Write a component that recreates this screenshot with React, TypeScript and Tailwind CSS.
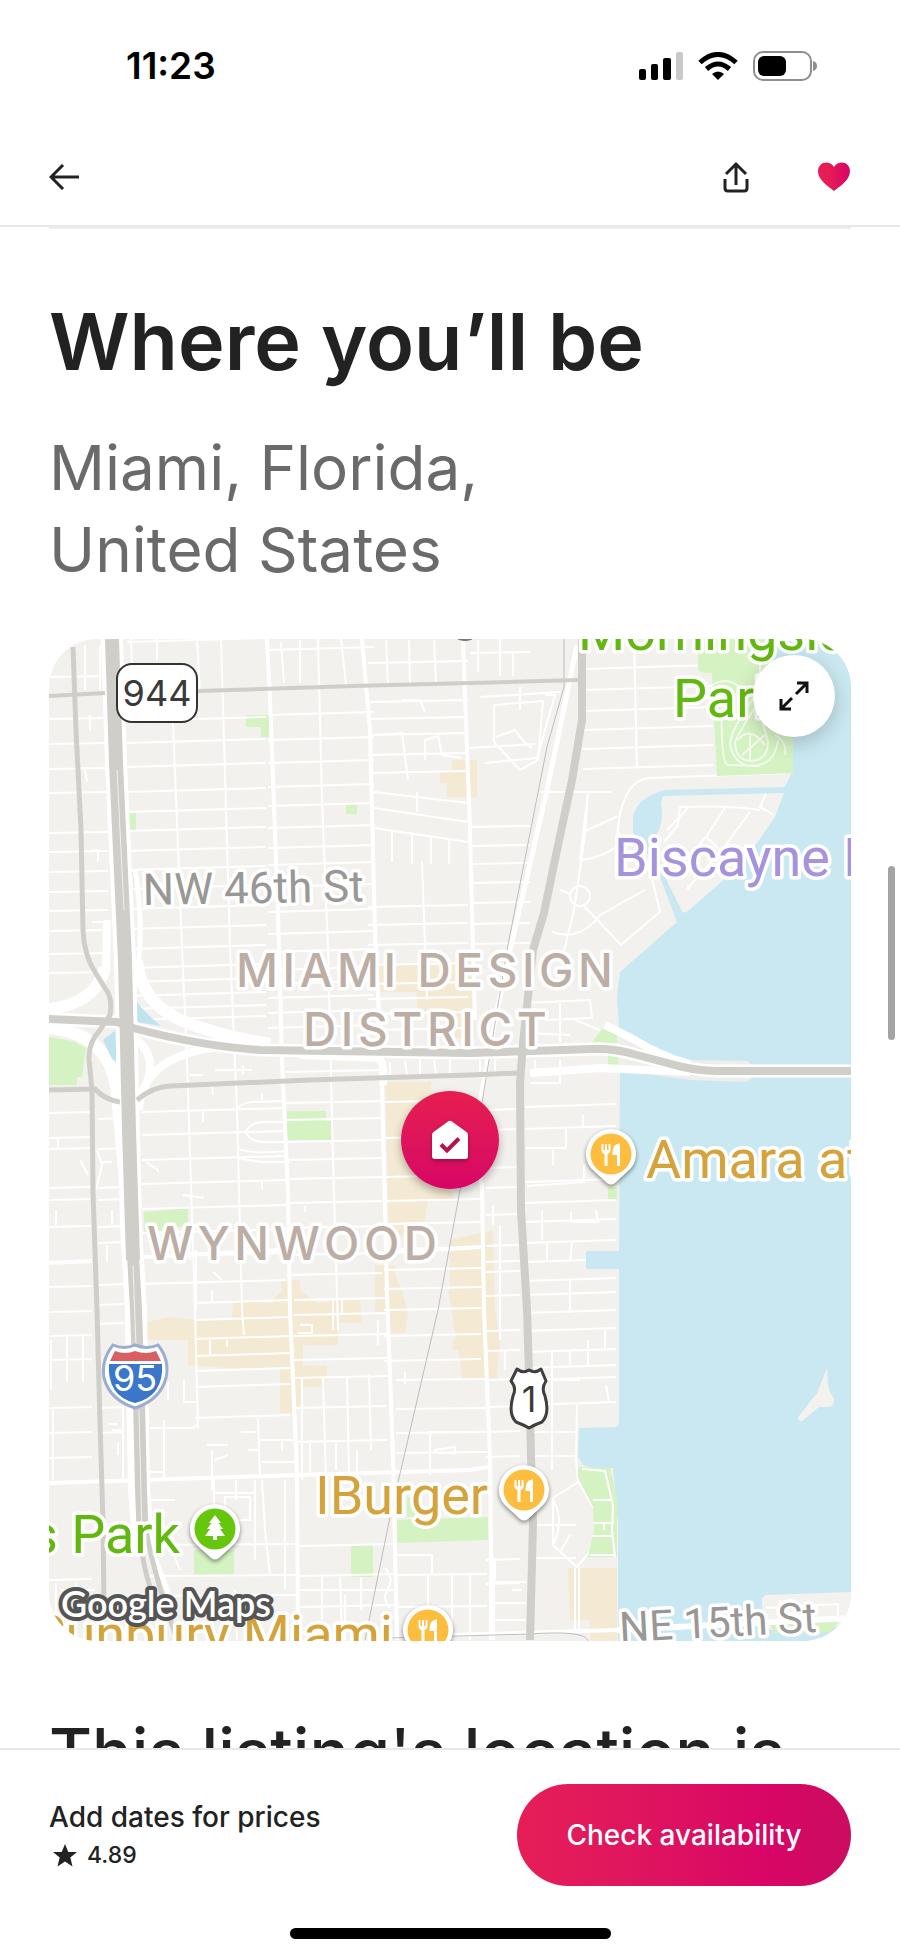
import { Fragment } from "react";

type Block = { x1: number; x2: number; slope: number; ys: number[] };

// East-west streets, grouped by the blocks they run through
const streetBlocks: Block[] = [
  { x1: 49, x2: 108, slope: -0.02, ys: [677, 719, 744, 769, 793, 833, 852, 872, 892, 911, 931, 954, 973] },
  { x1: 127, x2: 266, slope: -0.03, ys: [642, 721, 743, 767, 792, 812, 831, 851, 870, 889, 909, 929, 949, 968, 982, 996, 1009, 1020] },
  { x1: 268, x2: 374, slope: -0.03, ys: [650, 715, 740, 763, 787, 806, 828, 848, 865, 887, 912, 934, 952, 970, 984, 998, 1013, 1028] },
  { x1: 368, x2: 468, slope: -0.02, ys: [663, 702, 719, 735, 755, 773, 907, 925, 945, 965, 984, 999, 1014, 1030] },
  { x1: 470, x2: 530, slope: -0.02, ys: [653, 827, 846, 864, 883, 903, 924, 944] },
  { x1: 583, x2: 713, slope: -0.03, ys: [669, 690, 711, 730, 749, 769] },
  { x1: 49, x2: 92, slope: -0.02, ys: [1113, 1138, 1149, 1188, 1200, 1227, 1287, 1312, 1336, 1360, 1408, 1433, 1458, 1580] },
  { x1: 98, x2: 124, slope: -0.02, ys: [1119, 1149, 1188, 1200, 1227, 1243, 1285, 1305, 1324, 1408, 1433] },
  { x1: 142, x2: 286, slope: -0.03, ys: [1112, 1135, 1160, 1184, 1209, 1233, 1257, 1284] },
  { x1: 286, x2: 382, slope: -0.02, ys: [1072, 1103, 1120, 1142, 1160, 1179, 1203, 1228, 1255, 1275] },
  { x1: 384, x2: 481, slope: -0.02, ys: [1102, 1138, 1177, 1201, 1224, 1249, 1270, 1289, 1310, 1336, 1361] },
  { x1: 525, x2: 616, slope: -0.03, ys: [1107, 1129, 1182, 1203, 1222, 1243, 1262, 1281, 1295, 1313, 1331, 1352, 1368, 1380, 1405] },
  { x1: 486, x2: 520, slope: -0.02, ys: [1110, 1130, 1168, 1188, 1215, 1246, 1262, 1272, 1296, 1331, 1351, 1380, 1407, 1432, 1457, 1560, 1584] },
  { x1: 195, x2: 290, slope: -0.03, ys: [1303, 1320, 1339, 1356, 1371, 1387, 1418] },
  { x1: 294, x2: 387, slope: -0.02, ys: [1300, 1315, 1336, 1360, 1378, 1408, 1442] },
  { x1: 396, x2: 487, slope: -0.01, ys: [1380, 1409, 1433, 1453, 1575, 1607] },
  { x1: 531, x2: 576, slope: -0.01, ys: [1432, 1456, 1525, 1558] },
  { x1: 150, x2: 300, slope: -0.01, ys: [1545, 1576, 1596] },
  { x1: 300, x2: 395, slope: -0.02, ys: [1546, 1576, 1607] },
];

const rows = (b: Block) =>
  b.ys.map((y) => `M${b.x1} ${y}L${b.x2} ${Math.round(y + (b.x2 - b.x1) * b.slope)}`).join("");

const minorStreets = [
  "M197 639L200 693M157 639V660M131 639L134 720M173 723L182 947L187 1060L195 1310L198 1428",
  "M221 639L224 740L230 947L237 1110L242 1310L244 1335M318 639L322 800L328 947L333 1160L338 1330",
  "M281 642L284 683M300 640V683M386 640L388 685M409 640L410 685M434 640L436 684M341 639L346 685",
  "M392 830V862M412 832V864M431 836V864M449 838V864M417 792V812M374 792L468 803M374 808L468 822M374 828L468 842",
  "M422 862L427 1000M634 639L637 767M500 639V676M513 652V676M478 640V672",
  "M494 705L543 701L538 760L520 770L494 742ZM496 737L515 730L524 742L532 748M470 748L535 744",
  "M545 695L555 695L537 758L485 763M520 687V710M480 697L560 692",
  "M425 760V740L438 736L442 755L462 758M402 700H420L425 712M374 735L402 733L408 780",
  "M85 645V690M100 645V690M90 715V730M85 770L87 782M92 850H98V862M92 922H107",
  "M541 792H612M588 793L585 835L574 910L563 955M588 793L580 860M583 832L618 816M580 860Q605 858 625 840",
  "M617 840Q620 780 650 778L785 773M618 830Q622 860 650 870L660 912L621 945L583 905M552 932Q580 942 600 915L645 890",
  "M570 896a10 10 0 1 0 20 0a10 10 0 1 0 -20 0M560 890L570 894",
  "M237 1110Q240 1103 252 1102L284 1101M245 1132Q252 1122 262 1122H285M245 1132Q252 1142 262 1142H285M238 1148Q250 1155 285 1151M238 1158L260 1162H290",
  "M188 1225L190 1260M196 1250V1310M213 1272L222 1280M183 1195L204 1198M146 1162L158 1170V1172M262 1182V1190M305 1206V1212",
  "M97 1150L102 1165L96 1190M80 1160L88 1175M101 1162H112M56 1210V1225M107 1245V1262",
  "M566 1129V1148H526M583 1115V1127M553 1148V1165M584 1165V1182L527 1186M542 1210V1240M571 1212V1222L598 1222L596 1210",
  "M547 1243V1262M572 1243L570 1262M570 1278V1313M605 1330V1350M588 1340V1365M570 1350V1365M606 1385L609 1402",
  "M577 1405L576 1460L578 1482L595 1510V1545L577 1567L553 1545V1498L578 1482M553 1500Q565 1520 553 1545M570 1535L560 1552",
  "M552 1350V1470M552 1380H580M493 1205V1225M500 1225V1340M505 1350V1370M575 1568V1630M579 1568V1630",
  "M67 1336V1382M83 1336V1382M51 1340V1390M53 1410V1480M123 1408V1480M164 1420V1480M168 1382V1400M184 1380V1402H196",
  "M150 1428L190 1428Q198 1428 198 1420M108 1424H118M112 1430H122M118 1442V1455",
  "M207 1445H228M212 1450V1490M215 1460L228 1455M258 1418L260 1478M241 1432H256M248 1450H259M282 1440V1450M262 1462H295M260 1440H295",
  "M214 1480V1530M236 1480V1500M255 1480V1560M285 1480V1590M213 1493H255M225 1497V1520H250V1497ZM262 1480L265 1530L270 1575M145 1500H175M145 1472H165M170 1545L180 1570",
  "M302 1378V1480M323 1378L326 1480M347 1376L349 1475M369 1374L371 1450M336 1440V1470M310 1440V1475M357 1450V1475M378 1320V1345M342 1300V1314",
  "M430 1475V1432H470M435 1450L455 1447V1453H436ZM405 1384L405 1372M340 1577L342 1635M322 1577V1620M361 1577V1610M300 1590H395M397 1555H432V1575",
  "M385 1568Q395 1580 387 1590Q382 1600 390 1608M428 1575V1635M452 1573V1640M470 1573V1640M490 1575V1640M495 1558V1580M493 1582H526M493 1603H526M493 1620H526M494 1558V1640",
  "M512 1590H522M56 1583V1620M76 1583V1620M60 1590H95M235 1590L237 1640M345 1595V1640M210 1355V1340M227 1347V1340M212 1303V1290",
  "M300 1325H312V1333H298M333 1300V1330M95 1243V1300M112 1210V1225M135 1410V1420M58 1139V1149M100 1480H145",
  "M545 1020L592 1018L590 1000L525 1003M560 1000V1042M525 1033L570 1035M575 1020L600 1030M535 1060V1075M560 1060V1083H530",
  "M390 1062V1078M405 1060L407 1076M420 1058V1074M434 1060L436 1074M450 1060V1074M480 1060V1074M495 1060V1072M190 1075H203M215 1070H252M243 1065V1075M262 1093V1100M212 1086L213 1095M203 1110V1122",
];

const halo = { paintOrder: "stroke", stroke: "#fff", strokeWidth: 7, strokeLinejoin: "round" } as const;

function RoadNetwork() {
  return (
    <g fill="none">
      <g stroke="#fff" strokeWidth="2">
        {streetBlocks.map((b) => (
          <path key={`${b.x1}-${b.ys[0]}`} d={rows(b)} />
        ))}
        {minorStreets.map((d) => (
          <path key={d} d={d} />
        ))}
      </g>
      <g stroke="#fff" strokeWidth="4">
        <path d="M267 639L270 697L278 913L282 1060L288 1193L290 1310L297 1473L298 1640" />
        <path d="M362 639L370 730L375 930L382 1083L387 1293L393 1457L397 1640" />
        <path d="M463 639L470 830L473 950L475 1020" />
        <path d="M482 1183L484 1310L490 1457L492 1640M481 1170V1185" />
        <path d="M49 1483L145 1480L298 1475L470 1470L488 1467M49 1263L92 1261M143 1257L280 1250M395 1252L482 1247" />
        <path d="M577 645L563 713L547 790L510 950L495 1020L480 1103" strokeWidth="5" />
        <path d="M450 1635L617 1630" />
      </g>
      <path d="M564 639V687L547 747L507 950L482 1103L460 1190L438 1310L390 1517L365 1640M390 1638L530 1634Q586 1630 588 1641" stroke="#bdbdbd" />
    </g>
  );
}

function FoodPin({ x, y }: { x: number; y: number }) {
  return (
    <g transform={`translate(${x} ${y})`}>
      <path className="drop-shadow-[0_2px_2px_rgba(0,0,0,0.45)]" d="M-24 7A25 25 0 1 1 24 7Q22 13 16 18L4 29Q0 32 -4 29L-16 18Q-22 13 -24 7Z" fill="#fff" />
      <circle r="20.5" fill="#fdbe3f" />
      <path d="M-9.5-10v6a4.5 4.5 0 0 0 3 4.2V12h3V.2a4.5 4.5 0 0 0 3-4.2v-6h-2v6H-4v-6h-2v6h-1.5v-6ZM9-10.5C4-10.5 1.5-7 1.5 1H6V12h3Z" fill="#fff" />
    </g>
  );
}

function ParkPin({ x, y }: { x: number; y: number }) {
  return (
    <g transform={`translate(${x} ${y})`}>
      <path className="drop-shadow-[0_2px_2px_rgba(0,0,0,0.45)]" d="M-24 7A25 25 0 1 1 24 7Q22 13 16 18L4 29Q0 32 -4 29L-16 18Q-22 13 -24 7Z" fill="#fff" />
      <circle r="20.5" fill="#66c60e" />
      <path d="M0-14L6-6H3.5L8 0H5L10 7H2V11H-2V7H-10L-5 0H-8L-3.5-6H-6Z" fill="#fff" />
    </g>
  );
}

function MapCanvas() {
  return (
    <svg viewBox="49 639 802 1002" preserveAspectRatio="xMidYMid slice" className="block h-full w-full" role="img" aria-label="Map of Miami">
      <rect x="49" y="639" width="802" height="1002" fill="#f2f1ee" />

      {/* commercial areas */}
      <g fill="#f4ead3">
        <path d="M452 760H477V797H447V783H440V771H452Z" />
        <path d="M378 965L475 960V1038H455V1010H417V992H380Z" />
        <path d="M385 1082H431V1150Q450 1180 453 1195V1200H428L424 1225H405L403 1237L389 1232Z" />
        <path d="M147 1322L170 1317L195 1320H232L233 1300L270 1303L282 1290L280 1280H300V1290L317 1303L360 1298L362 1323H338V1345H303V1365L327 1366V1378L320 1387H303V1407H292V1413H280V1367L237 1369L188 1365V1340H147Z" />
        <path d="M375 1265H395V1275L402 1290L408 1313L405 1333H390V1313H375Z" />
        <path d="M450 1240L493 1230L495 1310L500 1340L497 1380H467L465 1350H453V1343L465 1310L450 1300ZM448 1290H470V1380H463Z" />
        <path d="M568 1568H617V1641H590V1620H570Z" />
      </g>

      {/* parks */}
      <g fill="#d5f2c2">
        <path d="M246 715H269V737H261V727H246ZM346 805H357V814H346ZM128 811H136V831H128ZM132 872H138V887H134Z" />
        <path d="M49 1037L73 1041L86 1048L82 1077H77V1085H49ZM287 1111H326V1121H332V1140H287ZM144 1212L188 1208V1225L157 1232H144Z" />
        <path d="M194 1550H234V1575H194ZM351 1545H373V1577H351ZM397 1520L488 1517V1540L397 1543ZM407 1497H420V1517H407Z" />
      </g>

      <RoadNetwork />

      {/* bay */}
      <path
        fill="#c9e8f1"
        d="M764 639H851V1641H618L618 1523L613 1468H593L583 1465L578 1457L579 1428L615 1427Q619 1427 619 1422V1269H586V1251H619L620 1060L619 1027L617 997L620 972L677 922L660 877L647 853L633 833V817Q637 797 665 790L785 787L793 770V743L780 690Z"
      />
      <path fill="#f3f2ef" d="M663 796L784 793L775 817L757 843L727 877L688 911Q683 915 681 909L665 877L655 838Q665 822 661 803Z" />
      <path fill="none" stroke="#fff" strokeWidth="2" d="M766 794L760 807L774 815M760 810Q730 805 680 807L678 825L664 842M688 808L667 830M725 808L706 837L690 855M750 812L722 850L688 888M706 837L720 850M688 885v5" />
      <path fill="#f3f2ef" d="M827 1368L828 1385Q829 1393 834 1398Q835 1407 827 1407L819 1407L802 1421Q798 1422 798 1417L817 1393Z" />
      <path fill="#f3f2ef" d="M762 1598L766 1595L851 1592V1626L762 1630Z" />
      <path fill="#d5f2c2" d="M770 1625L840 1620L830 1632L775 1634Z" />
      <path stroke="#fff" strokeWidth="6" d="M617 1630L851 1618" />
      <path fill="none" stroke="#fff" strokeWidth="2" d="M766 1608L838 1604V1616M780 1600V1615" />

      {/* waterfront parks */}
      <path fill="#d5f2c2" d="M698 639H764L785 700L793 743V773L717 776L712 673Q698 674 698 668Z" />
      <path fill="none" stroke="#f1faeb" strokeWidth="2" d="M760 650V700Q740 730 735 742Q735 760 751 761Q768 760 768 742Q765 730 760 715M756 695Q730 730 730 745Q735 766 752 766Q775 765 778 740M722 690Q720 765 728 765L760 766M738 740Q750 725 765 745M742 755L765 735M712 685Q730 675 742 690M775 735Q787 742 785 755M750 735V760" />
      <path fill="#d5f2c2" d="M578 1467L610 1468L617 1497V1557H588L594 1530L593 1507L578 1477ZM590 1045L602 1029L617 1033V1045ZM608 1055H618V1067H608ZM608 1187H617V1199H608Z" />
      <path fill="none" stroke="#fff" strokeWidth="2" d="M582 1469L605 1471L613 1505L612 1530L615 1557M593 1500H613M594 1523H614M592 1536H612M604 1523V1530M590 1555H615" />

      {/* interchange */}
      <g fill="none" stroke="#fff">
        <path strokeWidth="12" d="M49 1009Q95 1004 105 968M137 960Q140 1003 185 1022Q220 1036 270 1044M49 1028Q112 1034 117 1095L125 1180" />
        <path strokeWidth="8" d="M139 1110Q142 1052 230 1046M137 1040Q160 1060 143 1090M106 972L107 920M122 1100L127 1250M300 1055L378 1058Q385 1062 383 1085" />
        <path strokeWidth="5" d="M135 870Q145 930 136 980M145 1400V1490M148 1540L175 1610" />
      </g>
      <path fill="#bfe4ef" d="M137 1002Q142 1010 161 1026L136 1022ZM116 1030V1062L112 1059L103 1040Z" />

      {/* causeway */}
      <path fill="#efeeeb" d="M618 1030L680 1060L748 1061L753 1067V1078L746 1082L690 1080L618 1070Z" />
      <path fill="none" stroke="#fff" strokeWidth="8" d="M605 1025L635 1040Q660 1056 690 1064M530 1073L600 1068L690 1072" />

      {/* arterials */}
      <g fill="none" stroke="#fff">
        <path strokeWidth="13" d="M49 1019L117 1022L133 1028Q200 1046 260 1050L470 1053L593 1049Q613 1048 637 1055L683 1067Q700 1071 720 1071H851" />
        <path strokeWidth="22" d="M112 639L116 763L125 960L131 1227L136 1310L139 1490L144 1550" />
      </g>
      <g fill="none" stroke="#d0cec9">
        <path strokeWidth="5" d="M73 647L76 730L81 830L83 930Q84 955 95 972L105 988Q113 998 110 1015L100 1030Q88 1043 89 1060L92 1090L93 1193L97 1310L100 1423L103 1523L104 1605" />
        <path strokeWidth="4" d="M49 696L105 693M198 691L353 686L470 683L578 680" />
        <path strokeWidth="5" d="M49 1090L95 1089Q105 1100 120 1102M137 1100Q152 1087 170 1086L310 1080L470 1075L517 1073" />
        <path strokeWidth="8" d="M582 639L582 720L572 780L557 850L544 913L533 950L523 1043L520 1083L521 1210L527 1310L529 1373L531 1457L533 1523L530 1640" />
        <path strokeWidth="8" d="M49 1019L117 1022L133 1028Q200 1046 260 1050L470 1053L593 1049Q613 1048 637 1055L683 1067Q700 1071 720 1071H851" />
        <path strokeWidth="14" d="M112 639L116 763L125 960L129 1130L133 1260" />
        <path strokeWidth="12" d="M133 1255L136 1310L139 1400L141 1490L143 1540" />
        <path strokeWidth="5" d="M140 1530Q142 1570 155 1600M146 1530Q155 1580 178 1641" />
      </g>
      <path fill="none" d="M117 770L124 910M133 1265L136 1345M139 1410L142 1535" stroke="#f2f1ee" strokeWidth="1" />

      {/* area and street names */}
      <g {...halo} className="font-['Roboto','Inter',sans-serif] text-[44px]" fill="#999896">
        <text x="143" y="905" transform="rotate(-1 143 905)">NW 46th St</text>
      </g>
      <g {...halo} className="font-['Roboto','Inter',sans-serif] text-[42px]" fill="#999896">
        <text x="620" y="1642" transform="rotate(-3 620 1642)">NE 15th St</text>
      </g>
      <g {...halo} className="font-['Inter',sans-serif] text-[46px] font-medium tracking-widest" fill="#bcaea5">
        <text x="236" y="987">MIAMI DESIGN</text>
        <text x="303" y="1046">DISTRICT</text>
        <text x="147" y="1260">WYNWOOD</text>
      </g>

      {/* places */}
      <g {...halo} className="font-['Roboto','Inter',sans-serif] text-[54px]">
        <text x="578" y="650" fill="#63b80f">Morningside</text>
        <text x="673" y="717" fill="#63b80f">Park</text>
        <text x="180" y="1553" textAnchor="end" fill="#63b80f">s Park</text>
        <text x="614" y="876" fill="#a594dd">Biscayne Bay</text>
        <text x="646" y="1178" fill="#d5a33b">Amara at</text>
        <text x="315" y="1514" fill="#d5a33b">IBurger</text>
        <text x="393" y="1653" textAnchor="end" fill="#d5a33b">Sunbury Miami</text>
      </g>

      <FoodPin x={611} y={1154} />
      <FoodPin x={524} y={1490} />
      <FoodPin x={428} y={1630} />
      <ParkPin x={215} y={1529} />
      <ellipse cx="465" cy="638" rx="8" ry="3" fill="#777" />

      {/* route shields */}
      <rect x="117" y="664" width="80" height="58" rx="15" fill="#fff" stroke="#333" strokeWidth="2" />
      <text x="157" y="706" textAnchor="middle" fill="#3a3a3a" className="font-['Inter',sans-serif] text-[36px]">944</text>

      <path d="M113 1345Q124 1350 135 1345Q147 1350 158 1345Q170 1360 166 1378Q160 1400 135 1408Q110 1400 104 1378Q101 1360 113 1345Z" fill="#fff" stroke="#9aafd0" strokeWidth="3" />
      <path d="M115 1351Q125 1355 135 1351Q146 1355 156 1351L161 1361H110Z" fill="#d95f62" />
      <path d="M109 1364H162Q164 1396 135 1403Q107 1396 109 1364Z" fill="#3a77cb" />
      <text x="135" y="1391" textAnchor="middle" fill="#fff" className="font-['Inter',sans-serif] text-[36px]">95</text>

      <path d="M517 1369Q523 1374 529 1370Q535 1374 541 1369L546 1381Q541 1388 545 1396Q550 1414 542 1422Q534 1425 529 1428Q524 1425 516 1422Q508 1414 513 1396Q517 1388 511 1381Z" fill="#fff" stroke="#3f3f3f" strokeWidth="3" strokeLinejoin="round" />
      <text x="529" y="1412" textAnchor="middle" fill="#3a3a3a" className="font-['Inter',sans-serif] text-[36px]">1</text>

      <text x="61" y="1617" paintOrder="stroke" stroke="#555" strokeWidth="8" strokeLinejoin="round" fill="#fff" className="font-['Lato',sans-serif] text-[36px] font-semibold">
        Google Maps
      </text>
    </svg>
  );
}

function HomeMarker() {
  return (
    <div className="absolute inset-0 m-auto flex size-[98px] items-center justify-center rounded-full bg-linear-to-b from-[#e61e4f] to-[#d70466] shadow-[0_4px_8px_rgba(0,0,0,0.3)]">
      <svg viewBox="0 0 38 40" className="h-10 w-[38px] drop-shadow-[0_2px_2px_rgba(0,0,0,0.3)]" aria-hidden>
        <path d="M17 1.5Q19 0 21 1.5L35.5 12Q37 13 37 15V36Q37 39 34 39H4Q1 39 1 36V15Q1 13 2.5 12Z" fill="#fff" />
        <path d="M10 24.5L16 30.5L28 18.5" fill="none" stroke="#b9104f" strokeWidth="4" />
      </svg>
    </div>
  );
}

function StatusBar() {
  return (
    <div className="flex h-[132px] items-center justify-between pr-[83px] pl-[126px]">
      <span className="text-[37px] font-semibold text-black">11:23</span>
      <div className="flex items-center gap-[15px]" aria-hidden>
        <svg viewBox="0 0 44 28" className="h-7 w-11">
          <rect y="17" width="7" height="11" rx="2" />
          <rect x="12" y="12" width="7" height="16" rx="2" />
          <rect x="24" y="6" width="8" height="22" rx="2" />
          <rect x="37" width="7" height="28" rx="2" fill="#c9c9c9" />
        </svg>
        <svg viewBox="0 0 40 28" className="h-7 w-10">
          <g fill="none" stroke="#000" strokeWidth="5">
            <path d="M2 10.5Q20-5.5 38 10.5" />
            <path d="M8.5 17Q20 7 31.5 17" />
          </g>
          <path d="M14 22Q20 17 26 22L20 28Z" />
        </svg>
        <svg viewBox="0 0 64 30" className="h-[30px] w-16">
          <rect x="1" y="1" width="57" height="28" rx="9" fill="none" stroke="#8e8e8e" strokeWidth="2" />
          <rect x="5" y="5" width="28" height="20" rx="6" />
          <path d="M60 10Q64 11 64 15T60 20Z" fill="#8e8e8e" />
        </svg>
      </div>
    </div>
  );
}

function NavBar() {
  return (
    <nav className="flex h-[93px] items-center justify-between px-[49px] pb-1">
      <button type="button" aria-label="Back">
        <svg viewBox="0 0 30 26" className="h-[26px] w-[30px]" fill="none" stroke="#222" strokeWidth="3">
          <path d="M14 1L2 13L14 25M2 13H30" />
        </svg>
      </button>
      <div className="flex items-center gap-[67px]">
        <button type="button" aria-label="Share">
          <svg viewBox="0 0 28 32" className="h-8 w-7" fill="none" stroke="#222" strokeWidth="3">
            <path d="M4 13L14 3L24 13M14 2V24M3 18V27Q3 30 6 30H22Q25 30 25 27V18" />
          </svg>
        </button>
        <button type="button" aria-label="Remove from wishlist">
          <svg viewBox="0 0 34 29" className="h-[29px] w-[34px]">
            <defs>
              <linearGradient id="heart">
                <stop offset="0.3" stopColor="#e61e55" />
                <stop offset="1" stopColor="#d70466" />
              </linearGradient>
            </defs>
            <path d="M17 5C20 0 25 0 28 1C34 4 34 11 31 16C28 21 22 25 17 29C12 25 6 21 3 16C0 11 0 4 6 1C9 0 14 0 17 5Z" fill="url(#heart)" />
          </svg>
        </button>
      </div>
    </nav>
  );
}

const address = ["Miami, Florida,", "United States"];

export default function App() {
  return (
    <div className="flex h-screen flex-col bg-white font-['Inter',sans-serif] text-[#222]">
      <header className="shrink-0 border-b-2 border-[#e8e8e8]">
        <StatusBar />
        <NavBar />
      </header>

      <main className="relative min-h-0 flex-1 overflow-hidden px-[49px]">
        <hr className="border-t-2 border-[#ececec]" />
        <h2 className="mt-16 text-[79px] leading-[96px] font-semibold">Where you’ll be</h2>
        <p className="mt-[38px] text-[62px] leading-[82px] text-[#6a6a6a]">
          {address.map((line) => (
            <Fragment key={line}>
              {line}
              <br />
            </Fragment>
          ))}
        </p>
        <div className="relative mt-12 aspect-[802/1002] w-full overflow-hidden rounded-[48px]">
          <MapCanvas />
          <HomeMarker />
          <button
            type="button"
            aria-label="Expand map"
            className="absolute top-4 right-4 flex size-[82px] items-center justify-center rounded-full bg-white shadow-[0_6px_20px_rgba(0,0,0,0.2)]"
          >
            <svg viewBox="0 0 30 30" className="size-[30px]" fill="none" stroke="#111" strokeWidth="3">
              <path d="M18 2H28V12M28 2L17 13M12 28H2V18M2 28L13 17" />
            </svg>
          </button>
        </div>
        <h3 className="mt-[70px] text-[66px] leading-[82px] font-medium whitespace-nowrap">This listing's location is</h3>
        <div className="absolute top-[639px] right-[5px] h-[174px] w-[7px] rounded-full bg-[#a3a3a3]" />
      </main>

      <footer className="shrink-0 border-t-2 border-[#e8e8e8] bg-white pt-[34px] pb-4">
        <div className="flex items-center justify-between px-[49px]">
          <div>
            <p className="text-[28px] leading-10 font-medium">Add dates for prices</p>
            <p className="flex items-center gap-[10px] text-[23px] leading-9 font-medium">
              <svg viewBox="0 0 24 23" className="ml-1 h-[23px] w-6" fill="#222" aria-hidden>
                <path d="M12 0L15.3 8H24L17.3 13.5L19.5 22.5L12 17.5L4.5 22.5L6.7 13.5L0 8H8.7Z" />
              </svg>
              4.89
            </p>
          </div>
          <button
            type="button"
            className="h-[102px] w-[334px] rounded-full bg-linear-to-r from-[#e61e57] via-[#d80566] via-75% to-[#cb0c60] text-[28px] font-medium text-white"
          >
            Check availability
          </button>
        </div>
        <div className="mx-auto mt-[42px] h-[11px] w-[321px] rounded-full bg-black" />
      </footer>
    </div>
  );
}
